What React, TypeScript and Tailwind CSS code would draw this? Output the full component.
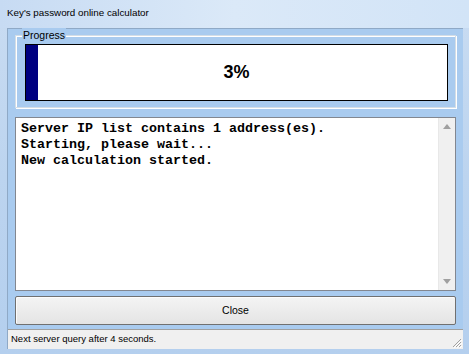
import React from "react";

export default function App() {
  const ui = { fontFamily: '"Liberation Sans", Arial, sans-serif' };
  const mono = { fontFamily: '"Liberation Mono", "Courier New", monospace' };
  return (
    <div
      className="w-[469px] h-[354px] flex flex-col overflow-hidden bg-gradient-to-b from-[#c9dcf2] via-[#bcd4ef] to-[#b4cfee]"
      style={ui}
    >
      {/* Title bar */}
      <div className="h-[28px] flex items-center pl-[7px] pb-[1px] text-[9.8px] text-black bg-gradient-to-r from-[#c7dbf3] via-[#dbe9f8] to-[#d2e4f7]">
        Key's password online calculator
      </div>
      {/* Client */}
      <div className="mx-[7px] w-[456px] h-[321px] bg-[#a9cbef] border-t border-l border-[#8fa9c6] flex flex-col">
        {/* Group box */}
        <div className="relative ml-[7px] mt-[6px] w-[441px] h-[73px] border border-[#d3dde6] shadow-[inset_1px_1px_0_#ffffff,1px_1px_0_#ffffff]">
          <div className="absolute left-[6px] -top-[8px] px-[1px] bg-[#a9cbef] text-[10.5px] leading-[14px] text-black">
            Progress
          </div>
          <div className="ml-[9px] mt-[8px] w-[423px] h-[57px] border border-black bg-white flex relative">
            <div className="w-[12px] h-full bg-[#000080]" />
            <div className="absolute inset-0 flex items-center justify-center text-[18px] font-bold text-black">
              3%
            </div>
          </div>
        </div>
        {/* Log box */}
        <div className="ml-[7px] mt-[9px] w-[441px] h-[176px] border border-[#828790] bg-white flex">
          <div className="flex-1 pl-[5px] pt-[3px] text-[13.33px] leading-[16px] font-bold text-black" style={mono}>
            <div>Server IP list contains 1 address(es).</div>
            <div>Starting, please wait...</div>
            <div>New calculation started.</div>
          </div>
          <div className="w-[17px] h-full bg-[#f0f0f0] border-l border-[#e8e8e8] flex flex-col items-center justify-between py-[6px]">
            <svg width="8" height="5" viewBox="0 0 8 5"><path d="M0 5 L4 0 L8 5 Z" fill="#a0a0a0" /></svg>
            <svg width="8" height="5" viewBox="0 0 8 5"><path d="M0 0 L4 5 L8 0 Z" fill="#a0a0a0" /></svg>
          </div>
        </div>
        {/* Close button */}
        <div className="ml-[7px] mt-[5px] w-[441px] h-[29px] border border-[#707070] rounded-[2px] bg-gradient-to-b from-[#f4f4f4] to-[#e4e4e4] flex items-center justify-center text-[10.5px] text-black shadow-[inset_1px_1px_0_#fcfcfc]">
          Close
        </div>
        {/* Status bar */}
        <div className="mt-[4px] h-[20px] bg-[#f0f0f0] border-t border-[#a0a0a0] flex items-center justify-between pl-[3px] text-[9.5px] text-black relative">
          <span>Next server query after 4 seconds.</span>
          <svg className="absolute right-[1px] bottom-[1px]" width="12" height="12" viewBox="0 0 12 12">
            <path d="M11 3 L3 11 M11 6 L6 11 M11 9 L9 11" stroke="#a0a0a0" strokeWidth="1" />
            <path d="M12 4 L4 12 M12 7 L7 12 M12 10 L10 12" stroke="#ffffff" strokeWidth="1" />
          </svg>
        </div>
      </div>
    </div>
  );
}
